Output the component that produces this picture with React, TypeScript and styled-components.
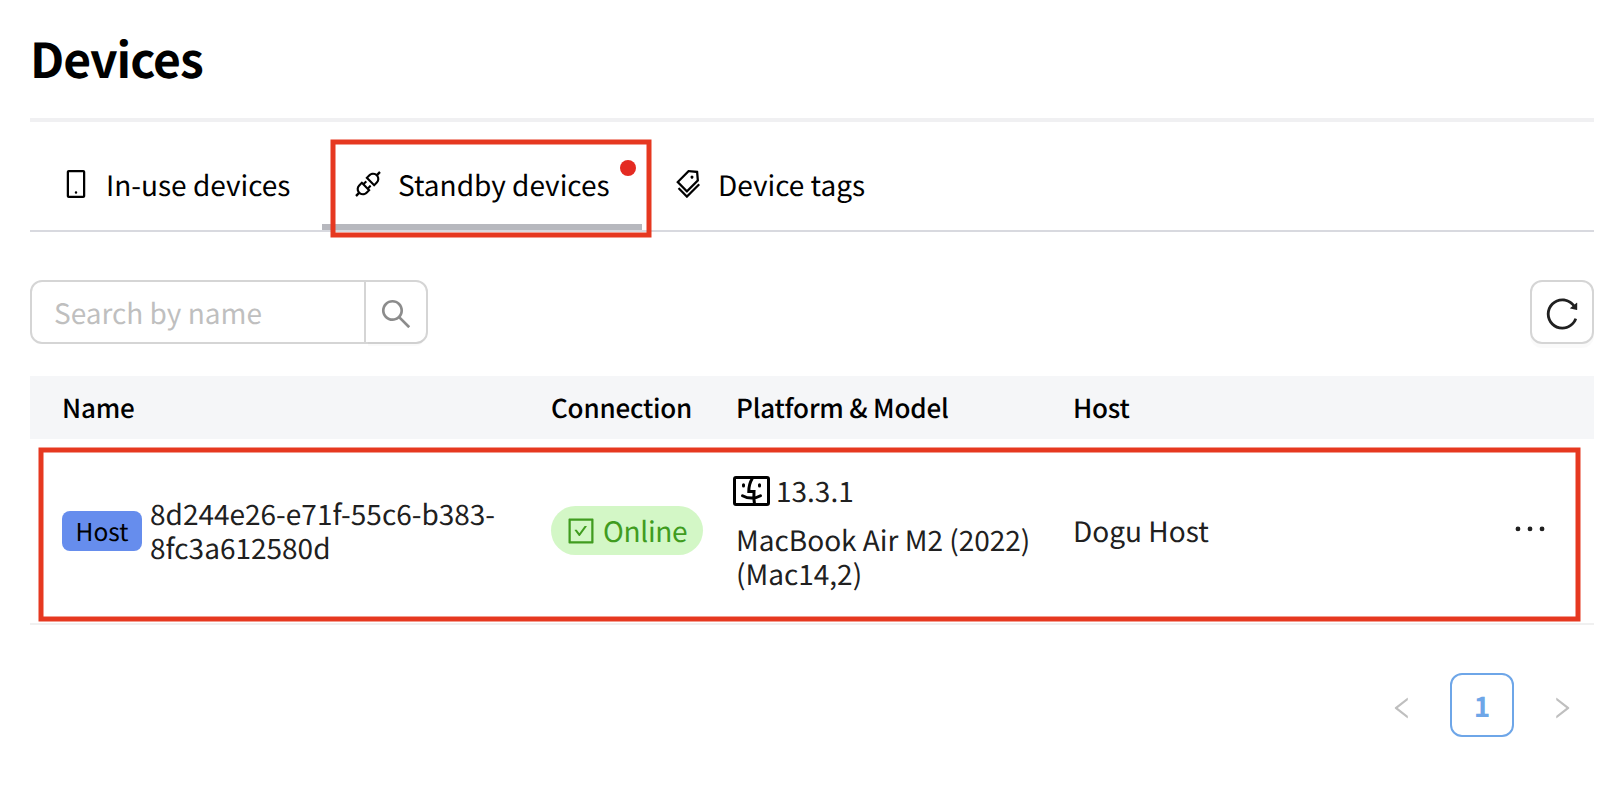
import React from 'react';
import styled, { createGlobalStyle } from 'styled-components';
import { AiOutlineMobile, AiOutlineApi, AiOutlineTags, AiOutlineSearch, AiOutlineReload, AiOutlineCheckSquare, AiOutlineEllipsis, AiOutlineLeft, AiOutlineRight } from 'react-icons/ai';

const Global = createGlobalStyle`
  * { box-sizing: border-box; }
  body { margin: 0; background: #fff; color: #000; font-family: "Noto Sans CJK KR", "Noto Sans", sans-serif; text-rendering: geometricPrecision; }
  svg { display: block; flex: none; }
`;
const Page = styled.main`
  width: 1614px; height: 800px; padding: 0 20px 0 30px;
  display: flex; flex-direction: column; overflow: hidden;
`;
const Header = styled.header`
  height: 122px; padding-bottom: 4px; flex: none; border-bottom: 4px solid #f0f0f2;
  display: flex; align-items: center;
`;
const Title = styled.h1`margin: 0; font-size: 48px; line-height: 60px; font-weight: 700; letter-spacing: -1px;`;
const Tabs = styled.nav`
  position: relative; height: 110px; flex: none; border-bottom: 2px solid #d8d9df; display: flex;
`;
const Tab = styled.a<{ $active?: boolean; $w: number }>`
  position: relative; width: ${p => p.$w}px; height: 108px; padding: 22px 0 0 30px;
  display: flex; align-items: center; gap: 14px; font-size: 28px; line-height: 40px;
  border-bottom: 6px solid ${p => (p.$active ? '#b7b8be' : 'transparent')};
  white-space: nowrap;
`;
const Label = styled.span`padding-top: 2px;`;
const Dot = styled.i`
  position: absolute; top: 38px; left: 298px; width: 16px; height: 16px; border-radius: 50%; background: #e42b22;
`;
const MarkSvg = styled.svg<{ $x: number; $y: number }>`
  position: absolute; left: ${p => p.$x}px; top: ${p => p.$y}px; pointer-events: none;
`;
const Mark = ({ x, y, w, h }: { x: number; y: number; w: number; h: number }) => (
  <MarkSvg $x={x} $y={y} width={w + 1} height={h + 1} fill="none" stroke="#e63820" strokeWidth="5">
    <rect x="3" y="3" width={w - 5} height={h - 5} />
  </MarkSvg>
);
const Toolbar = styled.div`margin-top: 48px; height: 64px; flex: none; display: flex; justify-content: space-between;`;
const Search = styled.div`
  width: 398px; height: 64px; border: 2px solid #d5d5d5; border-radius: 12px; display: flex;
`;
const Field = styled.div`
  width: 334px; padding-left: 22px; font-size: 28px; line-height: 63px; color: #bfbfbf; border-right: 2px solid #d5d5d5;
  height: 60px;
`;
const Go = styled.div`
  flex: 1; padding-top: 4px; display: flex; align-items: center; justify-content: center; color: #8c8c8c;
  border-radius: 0 10px 10px 0; box-shadow: 0 6px 0 -2px rgba(0,0,0,.02);
`;
const Square = styled.button`
  width: 64px; height: 64px; padding: 3px 0 0; background: #fff; border: 2px solid #d5d5d5; border-radius: 12px;
  box-shadow: 0 4px 0 rgba(0,0,0,.02); display: flex; align-items: center; justify-content: center; color: #202020;
`;
const Table = styled.section`position: relative; margin-top: 32px; flex: none;`;
const Row = styled.div`
  display: grid; grid-template-columns: 489px 185px 337px 1fr 64px; align-items: center; padding: 0 32px;
`;
const Head = styled(Row)`
  height: 63px; background: #f5f6f8; font-size: 26px; font-weight: 500; letter-spacing: -0.2px;
`;
const Body = styled(Row)`
  height: 186px; padding-bottom: 1px; border-bottom: 2px solid #f0f0f0; font-size: 28px; line-height: 33.5px; color: #202020;
`;
const NameCell = styled.div`display: flex; align-items: center; gap: 8px;`;
const Tag = styled.span`
  width: 80px; height: 40px; border-radius: 8px; background: #668ded; color: #000; font-size: 24.5px; line-height: 41px; text-align: center;
`;
const Status = styled.span`
  width: 152px; height: 49px; border-radius: 25px; background: #d3f7c6; color: #409c1f;
  padding-left: 14px; display: flex; align-items: center; gap: 6px; letter-spacing: -0.3px;
`;
const Model = styled.div`display: flex; flex-direction: column; gap: 16px; padding-top: 3px;`;
const Platform = styled.div`display: flex; align-items: center; gap: 6px; margin-left: -3px;`;
const More = styled.span`justify-self: center; padding-bottom: 3px;`;
const Pager = styled.div`
  margin-top: 48px; height: 64px; display: flex; justify-content: flex-end; align-items: center; color: #bfbfbf;
`;
const Arrow = styled.span`width: 64px; padding-top: 5px; display: flex; justify-content: center;`;
const Current = styled.span`
  width: 64px; height: 64px; margin: 0 16px; border: 2px solid #6ea6e8; border-radius: 12px; color: #6ea6e8;
  font-size: 28px; font-weight: 700; line-height: 62px; text-align: center;
`;
const Finder = () => (
  <svg width="37" height="30" viewBox="0 0 37 30" fill="none" stroke="#000" strokeWidth="3" strokeLinecap="round">
    <rect x="1.5" y="1.5" width="34" height="27" rx="1.5" />
    <path d="M19.3 2.5Q15.8 8 15.8 15.5H21Q20.5 23 21.5 28" strokeLinecap="butt" />
    <path d="M10.5 8.7v1.3M26.5 8.7v1.3M9.5 19.7Q18.5 24.5 27.5 19.7" />
  </svg>
);

export default function App() {
  return (
    <>
      <Global />
      <Page>
        <Header><Title>Devices</Title></Header>
        <Tabs>
          <Tab $w={292}><AiOutlineMobile size={32} /><Label>In-use devices</Label></Tab>
          <Tab $w={320} $active><AiOutlineApi size={32} /><Label>Standby devices</Label><Dot /></Tab>
          <Tab $w={260}><AiOutlineTags size={32} /><Label>Device tags</Label></Tab>
          <Mark x={300} y={17} w={321} h={98} />
        </Tabs>
        <Toolbar>
          <Search><Field>Search by name</Field><Go><AiOutlineSearch size={36} /></Go></Search>
          <Square><AiOutlineReload size={38} /></Square>
        </Toolbar>
        <Table>
          <Head><span>Name</span><span>Connection</span><span>Platform &amp; Model</span><span>Host</span></Head>
          <Body>
            <NameCell><Tag>Host</Tag><Label>8d244e26-e71f-55c6-b383-<br />8fc3a612580d</Label></NameCell>
            <Status><AiOutlineCheckSquare size={32} /><Label>Online</Label></Status>
            <Model><Platform><Finder /><Label>13.3.1</Label></Platform><span>MacBook Air M2 (2022)<br />(Mac14,2)</span></Model>
            <Label>Dogu Host</Label>
            <More><AiOutlineEllipsis size={44} /></More>
          </Body>
          <Mark x={8} y={71} w={1542} h={174} />
        </Table>
        <Pager><Arrow><AiOutlineLeft size={28} /></Arrow><Current>1</Current><Arrow><AiOutlineRight size={28} /></Arrow></Pager>
      </Page>
    </>
  );
}
